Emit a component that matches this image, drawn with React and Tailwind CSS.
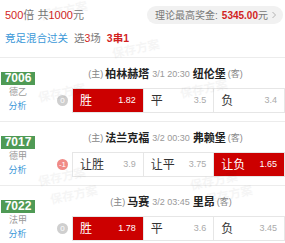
import React from "react";

const F = { fontFamily: "'Liberation Sans','Noto Sans CJK SC',sans-serif" };

const matches = [
  {
    id: "7006", league: "德乙", home: "柏林赫塔", away: "纽伦堡", time: "3/1 20:30",
    hc: "0", hcRed: false,
    opts: [["胜", "1.82", true], ["平", "3.5", false], ["负", "3.4", false]],
  },
  {
    id: "7017", league: "德甲", home: "法兰克福", away: "弗赖堡", time: "3/2 00:30",
    hc: "-1", hcRed: true,
    opts: [["让胜", "3.9", false], ["让平", "3.75", false], ["让负", "1.65", true]],
  },
  {
    id: "7022", league: "法甲", home: "马赛", away: "里昂", time: "3/2 03:45",
    hc: "0", hcRed: false,
    opts: [["胜", "1.78", true], ["平", "3.6", false], ["负", "3.45", false]],
  },
];

function Match({ m }) {
  return (
    <div className="flex h-[64px] border-b border-[#ececec]">
      <div className="w-[57px] flex flex-col items-start pt-[14px]">
        <div className="ml-[1px] w-[34px] h-[13px] bg-[#4f9a55] text-white text-[12px] font-bold leading-[13px] text-center">
          {m.id}
        </div>
        <div className="w-[36px] text-center text-[9px] leading-[12px] text-[#999] mt-[1px]">{m.league}</div>
        <div className="w-[35px] text-center text-[9px] leading-[12px] text-[#3a98d8] mt-[2px]">分析</div>
      </div>
      <div className="flex-1 flex flex-col">
        <div className="grid grid-cols-[1fr_auto_1fr] items-center h-[30px] pt-[3px]">
          <div className="flex items-center justify-end gap-[2px]">
            <span className="text-[9px] text-[#888]">(主)</span>
            <span className="text-[11px] font-bold text-[#222]">{m.home}</span>
          </div>
          <span className="text-[9px] text-[#999] px-[3px]">{m.time}</span>
          <div className="flex items-center gap-[2px]">
            <span className="text-[11px] font-bold text-[#222]">{m.away}</span>
            <span className="text-[9px] text-[#888]">(客)</span>
          </div>
        </div>
        <div className="flex items-center h-[25px]">
          <div className="w-[15px] flex justify-start">
            <div
              className={`w-[11px] h-[11px] rounded-full flex items-center justify-center text-white text-[8px] leading-none ${m.hcRed ? "bg-[#f08a86]" : "bg-[#cfcfcf]"}`}
            >
              {m.hc}
            </div>
          </div>
          <div className="flex-1 flex h-[25px] border border-[#e6e6e6]">
            {m.opts.map(([l, o, sel], i) => (
              <div
                key={i}
                className={`flex-1 flex items-center justify-between pl-[7px] pr-[7px] ${i > 0 ? "border-l border-[#e6e6e6]" : ""} ${sel ? "bg-[#cc0000]" : "bg-white"}`}
              >
                <span className={`text-[12px] ${sel ? "text-white" : "text-[#333]"}`}>{l}</span>
                <span className={`text-[9px] ${sel ? "text-white" : "text-[#aaa]"}`}>{o}</span>
              </div>
            ))}
          </div>
        </div>
      </div>
    </div>
  );
}

export default function App() {
  const wm = [
    [40, 2], [112, 40], [38, 84], [180, 80], [38, 168], [190, 172], [50, 186], [205, 186],
  ];
  return (
    <div className="relative w-[285px] h-[243px] overflow-hidden bg-white" style={F}>
      <div className="h-[58px] border-b border-[#ececec] px-[5px]">
        <div className="flex items-center justify-between h-[30px]">
          <div className="text-[11px]">
            <span className="text-[#d21f1f]">500</span>
            <span className="text-[#777]">倍 共</span>
            <span className="text-[#d21f1f]">1000</span>
            <span className="text-[#777]">元</span>
          </div>
          <div className="flex items-center h-[18px] rounded-full bg-[#f1f1f1] pl-[8px] pr-[6px] mr-[-3px] text-[10px]">
            <span className="text-[#777]">理论最高奖金:</span>
            <span className="text-[#d21f1f] font-bold ml-[4px]">5345.00</span>
            <span className="text-[#777]">元</span>
            <svg width="6" height="8" viewBox="0 0 6 8" className="ml-[3px]">
              <path d="M1.5 1 L4.5 4 L1.5 7" fill="none" stroke="#aaa" strokeWidth="0.9" />
            </svg>
          </div>
        </div>
        <div className="flex items-center h-[18px] text-[10.5px]">
          <span className="text-[#3a98d8]">竞足混合过关</span>
          <span className="text-[#777] ml-[6px]">选</span>
          <span className="text-[#d21f1f]">3</span>
          <span className="text-[#777]">场</span>
          <span className="text-[#d21f1f] font-bold ml-[6px]">3串1</span>
        </div>
      </div>
      {matches.map((m) => (
        <Match key={m.id} m={m} />
      ))}
      {wm.map(([x, y], i) => (
        <div
          key={i}
          className="absolute pointer-events-none text-[12px] font-bold text-[#000] opacity-[0.035] rotate-[-12deg]"
          style={{ left: x, top: y }}
        >
          保存方案
        </div>
      ))}
    </div>
  );
}
